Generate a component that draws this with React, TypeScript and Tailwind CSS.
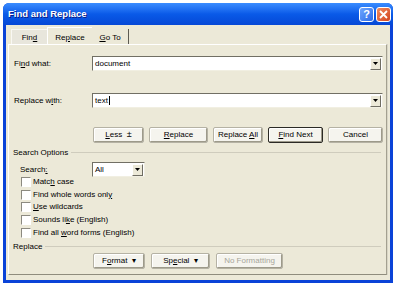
import type { ReactNode } from "react";

const font = { fontFamily: '"Liberation Sans", Arial, sans-serif' };

function U({ children }: { children: ReactNode }) {
  return <span className="underline underline-offset-1">{children}</span>;
}

function Btn({
  children,
  w,
  def,
  disabled,
}: {
  children: ReactNode;
  w: string;
  def?: boolean;
  disabled?: boolean;
}) {
  return (
    <div
      className={`flex h-[16px] items-center justify-center rounded-[2px] border ${
        def ? "border-[#2b2a25]" : "border-[#b5b2a4]"
      } bg-[#f5f4ee] shadow-[inset_-1px_-1px_0_#9d9a8a,inset_1px_1px_0_#ffffff] ${w} ${
        disabled ? "text-[#a7a59a]" : "text-black"
      }`}
    >
      <span className="whitespace-pre">{children}</span>
    </div>
  );
}

function Combo({ value, w, caret }: { value: string; w: string; caret?: boolean }) {
  return (
    <div
      className={`flex h-[15px] items-center border border-t-[#716f64] border-l-[#716f64] border-b-[#f1efe2] border-r-[#f1efe2] bg-white ${w}`}
    >
      <div className="flex-1 pl-[2px] leading-none">
        {value}
        {caret && <span className="ml-px inline-block h-[9px] w-px bg-black align-middle" />}
      </div>
      <div className="mr-px flex h-[12px] w-[11px] items-center justify-center border border-t-white border-l-white border-b-[#6f6d63] border-r-[#6f6d63] bg-[#ece9d8]">
        <svg width="5" height="3" viewBox="0 0 5 3">
          <path d="M0 0h5L2.5 3z" fill="#000" />
        </svg>
      </div>
    </div>
  );
}

function Check({ children }: { children: ReactNode }) {
  return (
    <div className="flex h-[12.6px] items-center gap-[2px] pl-[12px]">
      <div className="h-[10px] w-[10px] border border-t-[#8c8a80] border-l-[#8c8a80] border-b-white border-r-white bg-white" />
      <span>{children}</span>
    </div>
  );
}

function Group({ label }: { label: string }) {
  return (
    <div className="flex h-[12px] items-center gap-[3px] pl-[4px] pr-[5px]">
      <span>{label}</span>
      <div className="h-[2px] flex-1 border-t border-[#cfccbd] border-b-white" />
    </div>
  );
}

export default function App() {
  return (
    <div className="h-[284px] w-[397px] bg-white pl-[3px] pt-[3px] text-[8px] text-black" style={font}>
      <div className="flex h-[280px] w-[390px] flex-col overflow-hidden rounded-t-[6px] bg-[#0a43d8]">
        {/* title bar */}
        <div className="flex h-[22px] items-center bg-gradient-to-b from-[#3a8cff] via-[#0a5ae8] to-[#0648d6] pl-[5px] pr-[2px]">
          <span className="flex-1 text-[9.5px] font-bold text-white [text-shadow:1px_1px_0_#0a1e8a]">
            Find and Replace
          </span>
          <div className="flex gap-[2px]">
            <div className="flex h-[15px] w-[15px] items-center justify-center rounded-[3px] border border-white bg-gradient-to-br from-[#6fa6ff] to-[#2d6be8] text-[11px] font-bold leading-none text-white">
              ?
            </div>
            <div className="flex h-[15px] w-[15px] items-center justify-center rounded-[3px] border border-white bg-gradient-to-br from-[#f08a5c] to-[#d2431e]">
              <svg width="9" height="9" viewBox="0 0 9 9">
                <path d="M1 1l7 7M8 1L1 8" stroke="#fff" strokeWidth="1.8" />
              </svg>
            </div>
          </div>
        </div>
        {/* body */}
        <div className="mx-[3px] mb-[3px] flex flex-1 flex-col bg-[#ece9d8] pl-[2px] pr-[3px] pb-[5px]">
          {/* tabs */}
          <div className="flex h-[19px] items-end pl-[3px] leading-none">
            <div className="flex h-[15px] w-[36px] items-end justify-center border-l border-t border-[#f9f8f3] bg-[#e8e6dc] pb-[2px]">
              <span>
                Fin<U>d</U>
              </span>
            </div>
            <div className="flex h-[17px] w-[45px] items-end justify-center border-l border-t border-white bg-[#ece9d8] pb-[2px]">
              <span>
                Re<U>p</U>lace
              </span>
            </div>
            <div className="flex h-[15px] w-[37px] items-end justify-center border-r border-[#5d5b52] bg-[#ece9d8] pb-[2px]">
              <span>
                <U>G</U>o To
              </span>
            </div>
          </div>
          {/* panel */}
          <div className="flex flex-1 flex-col border border-t-white border-l-white border-b-[#8f8c7d] border-r-[#a3a091] shadow-[1px_0_0_#d9d6c6]">
            <div className="mt-[11px] flex items-center pl-[5px]">
              <span className="w-[78px]">
                Fi<U>n</U>d what:
              </span>
              <Combo value="document" w="w-[291px]" />
            </div>
            <div className="mt-[22px] flex items-center pl-[5px]">
              <span className="w-[78px]">
                Replace w<U>i</U>th:
              </span>
              <Combo value="text" w="w-[291px]" caret />
            </div>
            <div className="mt-[19px] flex gap-[5px] pl-[84px]">
              <Btn w="w-[51px]">
                <U>L</U>ess{"  "}<span className="text-[9px]">±</span>
              </Btn>
              <Btn w="w-[59px]">
                <U>R</U>eplace
              </Btn>
              <Btn w="w-[50px]">
                Replace <U>A</U>ll
              </Btn>
              <Btn w="w-[55px]" def>
                <U>F</U>ind Next
              </Btn>
              <Btn w="w-[55px]">Cancel</Btn>
            </div>
            <div className="mt-[4px]">
              <Group label="Search Options" />
            </div>
            <div className="mt-[3px] flex items-center pl-[11px]">
              <span className="w-[72px]">
                Search<U>:</U>
              </span>
              <Combo value="All" w="w-[53px]" />
            </div>
            <div className="mt-[-1px]">
              <Check>
                Matc<U>h</U> case
              </Check>
              <Check>
                Find whole words onl<U>y</U>
              </Check>
              <Check>
                <U>U</U>se wildcards
              </Check>
              <Check>
                Sounds li<U>k</U>e (English)
              </Check>
              <Check>
                Find all <U>w</U>ord forms (English)
              </Check>
            </div>
            <div className="mt-[2px]">
              <Group label="Replace" />
            </div>
            <div className="mt-[0px] flex gap-[6px] pl-[84px]">
              <Btn w="w-[52px]">
                F<U>o</U>rmat{"  "}▾
              </Btn>
              <Btn w="w-[59px]">
                Sp<U>e</U>cial{"  "}▾
              </Btn>
              <Btn w="w-[67px]" disabled>
                No Formatting
              </Btn>
            </div>
          </div>
        </div>
      </div>
    </div>
  );
}
